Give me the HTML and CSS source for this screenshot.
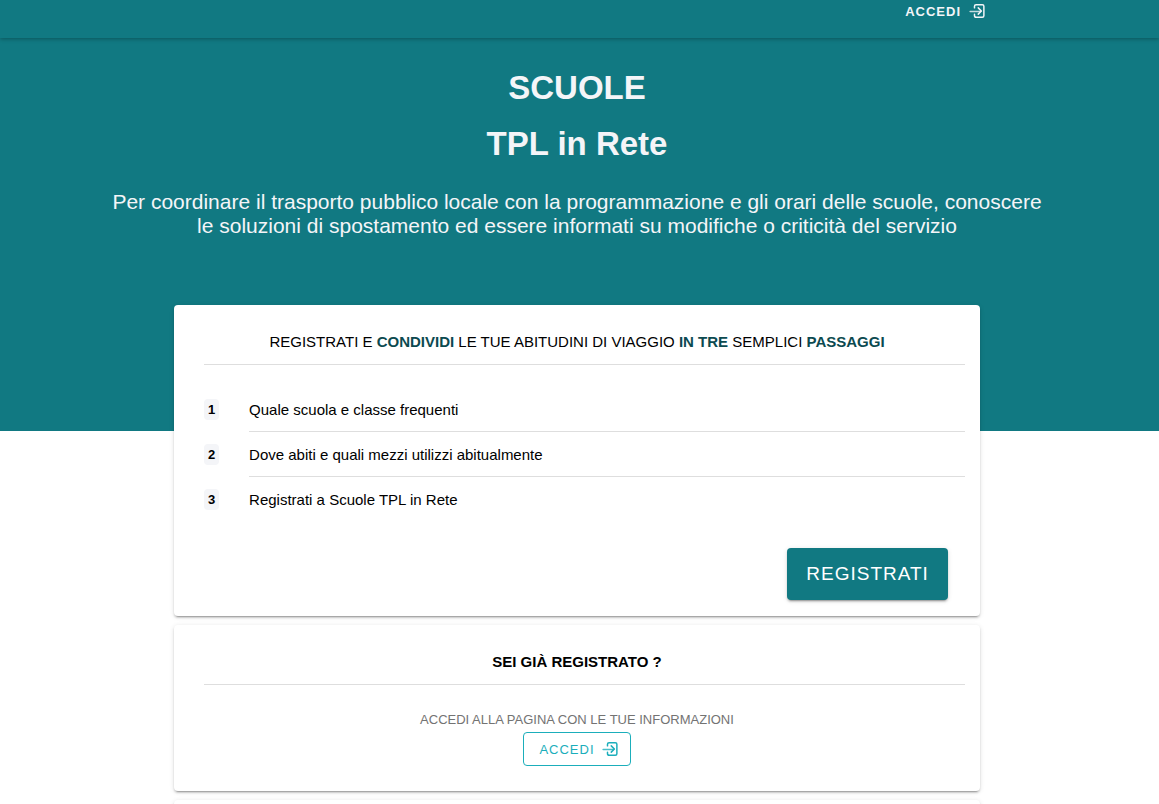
FILE: index.html
```html
<!DOCTYPE html>
<html lang="it">

<head>
    <meta charset="utf-8">
    <meta name="viewport" content="width=device-width, initial-scale=1">
    <title>Scuole TPL in Rete</title>
    <link rel="stylesheet" href="styles.css">
</head>

<body>
    <svg class="sprite" aria-hidden="true">
        <symbol id="log-in" viewBox="0 0 512 512">
            <g fill="none" stroke="currentColor" stroke-width="38" stroke-linecap="round" stroke-linejoin="round">
                <path d="M192 176v-40a40 40 0 0 1 40-40h160a40 40 0 0 1 40 40v240a40 40 0 0 1-40 40H240c-22 0-48-18-48-40v-40" />
                <path d="M288 336l80-80-80-80" />
                <path d="M80 268h272" stroke-opacity=".8" />
            </g>
        </symbol>
    </svg>

    <header class="toolbar">
        <a class="toolbar_login" href="#accedi">ACCEDI
            <svg class="icon"><use href="#log-in" /></svg>
        </a>
    </header>

    <main class="page">
        <section class="hero">
            <h1>SCUOLE</h1>
            <h1>TPL in Rete</h1>
            <p>Per coordinare il trasporto pubblico locale con la programmazione e gli orari delle scuole, conoscere le soluzioni di spostamento ed essere informati su modifiche o criticità del servizio</p>
        </section>

        <div class="cards">
            <section class="card">
                <h2 class="card_title">REGISTRATI E <b>CONDIVIDI</b> LE TUE ABITUDINI DI VIAGGIO <b>IN TRE</b> SEMPLICI <b>PASSAGGI</b></h2>
                <ol class="steps">
                    <li><span class="badge">1</span><span class="step_text">Quale scuola e classe frequenti</span></li>
                    <li><span class="badge">2</span><span class="step_text">Dove abiti e quali mezzi utilizzi abitualmente</span></li>
                    <li><span class="badge">3</span><span class="step_text">Registrati a Scuole TPL in Rete</span></li>
                </ol>
                <div class="card_action">
                    <button class="btn_register" type="button">REGISTRATI</button>
                </div>
            </section>

            <section class="card" id="accedi">
                <h2 class="card_title strong">SEI GIÀ REGISTRATO ?</h2>
                <div class="login_box">
                    <p>ACCEDI ALLA PAGINA CON LE TUE INFORMAZIONI</p>
                    <button class="btn_login" type="button">ACCEDI
                        <svg class="icon"><use href="#log-in" /></svg>
                    </button>
                </div>
            </section>

            <section class="card"></section>
        </div>
    </main>
</body>

</html>
```
FILE: styles.css
```css
* {
    box-sizing: border-box;
}

body {
    margin: 0;
    height: 100vh;
    overflow: hidden;
    background: #fff;
    color: #000;
    font-family: "Liberation Sans", Arial, sans-serif;
    font-size: 15px;
}

h1,
h2,
p,
ol {
    margin: 0;
    padding: 0;
}

button {
    font-family: inherit;
    letter-spacing: 1px;
    cursor: pointer;
}

.sprite {
    display: none;
}

.icon {
    width: 20px;
    height: 20px;
}

/* barra in alto */
.toolbar {
    position: relative;
    display: flex;
    justify-content: flex-end;
    align-items: flex-start;
    height: 38px;
    padding: 1px 172px 0 0;
    background: #117982;
    box-shadow: 0 1px 4px rgba(0, 0, 0, .3);
}

.toolbar_login {
    display: flex;
    align-items: center;
    gap: 6px;
    color: #f4f5f8;
    font-size: 13px;
    font-weight: bold;
    letter-spacing: 1px;
    text-decoration: none;
}

/* fascia verde dietro la prima card */
.page {
    padding: 22px 5px 0 0;
    background: linear-gradient(#117982, #117982) no-repeat;
    background-size: 100% 393px;
}

.hero {
    min-height: 245px;
    color: #f4f5f8;
    text-align: center;
}

.hero h1 {
    font-size: 33px;
    line-height: 56px;
}

.hero p {
    width: 81%;
    margin: 18px auto 0;
    font-size: 21px;
    line-height: 24px;
}

.cards {
    display: flex;
    flex-direction: column;
    gap: 9px;
    width: calc(70% - 2px);
    margin: 0 auto;
}

.card {
    padding: 20px 15px 16px 30px;
    background: #fff;
    border-radius: 4px;
    box-shadow: 0 3px 1px -2px rgba(0, 0, 0, .2), 0 2px 2px 0 rgba(0, 0, 0, .14), 0 1px 5px 0 rgba(0, 0, 0, .12);
}

.card_title {
    padding: 8px 15px 14px 0;
    border-bottom: 1px solid #dedede;
    font-size: 15px;
    font-weight: normal;
    line-height: 17px;
    text-align: center;
}

.card_title b {
    color: #0c4a50;
}

.card_title.strong {
    font-weight: bold;
}

.steps {
    margin-top: 22px;
    list-style: none;
}

.steps li {
    display: flex;
    align-items: center;
    gap: 30px;
}

.badge {
    width: 15px;
    border-radius: 4px;
    background: #f4f5f8;
    font-size: 13px;
    font-weight: bold;
    line-height: 21px;
    text-align: center;
}

.step_text {
    flex: 1;
    padding-top: 2px;
    border-bottom: 1px solid #dedede;
    line-height: 42px;
}

.steps li:last-child .step_text {
    border-bottom: none;
}

.card_action {
    display: flex;
    justify-content: flex-end;
    padding: 27px 17px 0 0;
}

.btn_register {
    height: 52px;
    padding: 0 19px;
    border: none;
    border-radius: 4px;
    background: #117982;
    color: #fff;
    font-size: 19px;
    box-shadow: 0 3px 1px -2px rgba(0, 0, 0, .2), 0 2px 2px 0 rgba(0, 0, 0, .14), 0 1px 5px 0 rgba(0, 0, 0, .12);
}

.login_box {
    display: flex;
    flex-direction: column;
    align-items: center;
    gap: 4px;
    padding: 26px 15px 9px 0;
}

.login_box p {
    color: #737373;
    font-size: 13px;
    line-height: 17px;
}

.btn_login {
    display: flex;
    align-items: center;
    gap: 5px;
    height: 34px;
    padding: 0 10px 0 15px;
    border: 1px solid #1baebb;
    border-radius: 4px;
    background: transparent;
    color: #1baebb;
    font-size: 13px;
}
```
